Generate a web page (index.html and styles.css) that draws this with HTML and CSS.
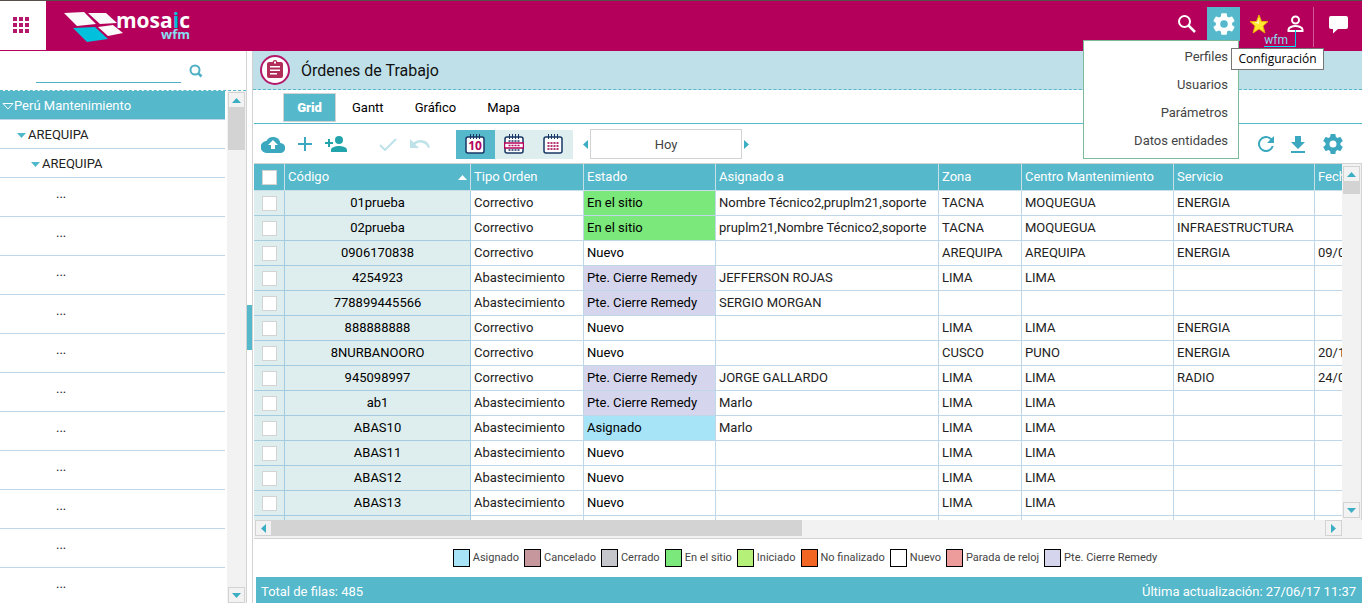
FILE: index.html
```html
<!DOCTYPE html>
<html lang="es">
<head>
<meta charset="utf-8">
<title>Mosaic WFM - Órdenes de Trabajo</title>
<link rel="stylesheet" href="styles.css">
</head>
<body>
<header class="topbar">
  <button class="apps" aria-label="Aplicaciones">
    <svg width="17" height="17" viewBox="0 0 17 17" fill="#b5176a"><path d="M0 0h4v4H0zM6 0h4v4H6zM12 0h4v4h-4zM0 6h4v4H0zM6 6h4v4H6zM12 6h4v4h-4zM0 12h4v4H0zM6 12h4v4H6zM12 12h4v4h-4z"/></svg>
  </button>
  <a class="logo" href="#" aria-label="mosaic wfm">
    <svg width="60" height="30" viewBox="0 0 60 30"><path fill="#fafafa" d="M0 1 20 0 32 12 13 14zM24 1 42 1 53 11 36 12zM34 15 49 13 59 21 44 24z"/><path fill="#00c0dc" d="M9 16 31 15 44 27 23 30z"/></svg>
    <span class="logo-text"><span class="logo-name">mosa<span class="logo-i">i</span>c</span><span class="logo-sub">wfm</span></span>
  </a>
  <div class="top-actions">
    <button class="top-btn" aria-label="Buscar"><svg width="20" height="20" viewBox="0 0 20 20" fill="none" stroke="#fff"><circle cx="7.500" cy="7.500" r="5.500" stroke-width="2"/><path d="m11.500 11.500 6.500 6.500" stroke-width="2.500"/></svg></button>
    <div class="config">
      <button class="top-btn config-btn" aria-label="Configuración"><svg width="26" height="26" viewBox="0 0 24 24" fill="#fff"><path d="M19.430 12.980c.040-.320.070-.640.070-.980s-.030-.660-.070-.980l2.110-1.650c.190-.150.240-.420.120-.640l-2-3.460c-.120-.220-.390-.300-.610-.220l-2.490 1c-.520-.400-1.080-.730-1.690-.980l-.380-2.650A.49.490 0 0 0 14 2h-4c-.250 0-.460.180-.490.420l-.380 2.650c-.610.250-1.170.590-1.690.980l-2.490-1c-.230-.090-.490 0-.610.220l-2 3.460c-.130.220-.070.490.120.640l2.110 1.650c-.040.320-.070.650-.070.980s.030.660.070.980l-2.110 1.650c-.190.150-.240.420-.120.640l2 3.460c.120.220.390.300.610.220l2.490-1c.520.400 1.080.730 1.690.980l.380 2.650c.030.240.240.420.490.420h4c.250 0 .460-.180.490-.420l.380-2.650c.610-.250 1.170-.590 1.690-.980l2.490 1c.230.090.490 0 .610-.220l2-3.460c.120-.220.070-.490-.120-.640zM12 15.500a3.500 3.500 0 1 1 0-7 3.500 3.500 0 0 1 0 7z"/></svg></button>
      <nav class="menu" aria-label="Configuración">
        <a href="#">Perfiles</a><a href="#">Usuarios</a><a href="#">Parámetros</a><a href="#">Datos entidades</a>
      </nav>
      <div class="tooltip" role="tooltip">Configuración</div>
    </div>
    <button class="top-btn star" aria-label="Favoritos"><svg width="20" height="20" viewBox="0 0 20 20"><path fill="#ffe92e" stroke="#e9a90c" d="m10 1 2.500 6.500h6.500l-5 4.500 2 7-6-4-6 4 2-7-5-4.500h6.500z"/><path fill="#fffbc0" d="m9.500 5 .5 5-5-1.500 3-.5z"/></svg></button>
    <div class="user">
      <button class="top-btn" aria-label="Usuario"><svg width="17" height="18" viewBox="0 0 17 18" fill="none" stroke="#fff" stroke-width="2"><circle cx="8.500" cy="5" r="3.500"/><path d="M1.500 16v-1.500c0-2 4-3.500 7-3.500s7 1.500 7 3.500V16z"/></svg></button>
      <a class="user-name" href="#">wfm</a>
    </div>
    <button class="top-btn chat" aria-label="Mensajes"><svg width="19" height="18" viewBox="0 0 19 18" fill="#fff"><path d="M2 0h15q2 0 2 2v9q0 2-2 2H9l-5 4.500V13H2q-2 0-2-2V2q0-2 2-2z"/></svg></button>
  </div>
</header>

<div class="workspace">
<aside class="sidebar">
  <form class="search">
    <input type="text" id="q" aria-label="Buscar entidad">
    <button type="button" aria-label="Buscar"><svg width="14" height="14" viewBox="0 0 14 14" fill="none" stroke="#4fb0c6"><circle cx="6" cy="6" r="4.500" stroke-width="2"/><path d="m9.500 9.500 3 3" stroke-width="2.500"/></svg></button>
  </form>
  <div class="tree-area">
    <ul class="tree">
      <li class="root"><svg width="12" height="7" viewBox="0 0 12 7"><path fill="none" stroke="#fff" d="M1 .5h10L6 6z"/></svg><span>Perú Mantenimiento</span></li>
      <li class="level-1"><svg width="9" height="5" viewBox="0 0 9 5"><path fill="#4fb8cb" d="M0 0h9L4.500 5z"/></svg><span>AREQUIPA</span></li>
      <li class="level-2"><svg width="9" height="5" viewBox="0 0 9 5"><path fill="#4fb8cb" d="M0 0h9L4.500 5z"/></svg><span>AREQUIPA</span></li>
      <li class="leaf">...</li><li class="leaf">...</li><li class="leaf">...</li><li class="leaf">...</li><li class="leaf">...</li><li class="leaf">...</li><li class="leaf">...</li><li class="leaf">...</li><li class="leaf">...</li><li class="leaf">...</li><li class="leaf">...</li>
    </ul>
    <div class="vscroll tree-scroll">
      <button class="arrow" aria-label="Subir"><svg width="9" height="5" viewBox="0 0 9 5"><path d="M0 5h9L4.500 0z"/></svg></button>
      <div class="thumb"></div>
      <button class="arrow end" aria-label="Bajar"><svg width="9" height="5" viewBox="0 0 9 5"><path d="M0 0h9L4.500 5z"/></svg></button>
    </div>
  </div>
</aside>
<div class="splitter"><div class="grip"></div></div>

<main class="main">
  <div class="title">
    <svg width="30" height="30" viewBox="0 0 30 30"><circle cx="15" cy="15" r="14" fill="#fff" stroke="#b5176a" stroke-width="2"/><path fill="#b32d5b" d="M9 7h3.500a2.600 2.600 0 0 1 5 0H21q2 0 2 2v12q0 2-2 2H9q-2 0-2-2V9q0-2 2-2z"/><path fill="#fff" d="M14 6.500h2v2h-2zM10 11h10v1.500H10zM10 14.500h10V16H10zM10 18h7v1.500h-7z"/></svg>
    <h1>Órdenes de Trabajo</h1>
  </div>
  <div class="tabs" role="tablist">
    <button class="tab active" role="tab">Grid</button><button class="tab" role="tab">Gantt</button><button class="tab" role="tab">Gráfico</button><button class="tab" role="tab">Mapa</button>
  </div>
  <div class="toolbar">
    <div class="tools">
      <button aria-label="Subir archivo"><svg width="24" height="17" viewBox="0 0 24 17"><path fill="#3ca8bf" d="M19.400 7A7.500 7.500 0 0 0 5.400 5 6 6 0 0 0 6 17h13a5 5 0 0 0 .4-10z"/><path fill="#fff" d="M10 13V9H7l5-5 5 5h-3v4z"/></svg></button>
      <button aria-label="Añadir"><svg width="14" height="14" viewBox="0 0 14 14"><path fill="#3ca8bf" d="M6 0h2v6h6v2H8v6H6V8H0V6h6z"/></svg></button>
      <button aria-label="Añadir usuario"><svg width="22" height="16" viewBox="0 0 22 16" fill="#23a3ac"><circle cx="14" cy="4" r="4"/><path d="M6 16v-2c0-3 5-4 8-4s8 1 8 4v2zM3 3h2v3h3v2H5v3H3V8H0V6h3z"/></svg></button>
      <button class="gap-before" aria-label="Aceptar" disabled><svg width="18" height="13" viewBox="0 0 18 13"><path fill="none" stroke="#bfe2ea" stroke-width="2" d="m1 7 5 5L17 1"/></svg></button>
      <button aria-label="Deshacer" disabled><svg width="20" height="10" viewBox="0 0 20 10"><path fill="#bfe2ea" d="M10.500 1c-2.600 0-5 1-6.900 2.600L0 0v9h9L5.400 5.400A8 8 0 0 1 18 9l2-.8A10 10 0 0 0 10.500 1z"/></svg></button>
    </div>
    <div class="periods">
      <button class="on" aria-label="Día"><svg width="20" height="20" viewBox="0 0 20 20"><rect x="1" y="3" width="18" height="16" rx="2" fill="#fff" stroke="#183766" stroke-width="1.500"/><path stroke="#183766" d="M5.500 0v5M8.500 0v5M11.500 0v5M14.500 0v5"/><text class="cal-day" x="10" y="16" text-anchor="middle">10</text></svg></button>
      <button aria-label="Semana"><svg width="20" height="20" viewBox="0 0 20 20"><rect x="1" y="3" width="18" height="16" rx="2" fill="#fff" stroke="#183766" stroke-width="1.500"/><path stroke="#183766" d="M5.500 0v5M8.500 0v5M11.500 0v5M14.500 0v5"/><path stroke="#183766" stroke-width="1.500" stroke-dasharray="2 1" d="M4.500 7h11M4.500 16h11"/><path fill="#fff" stroke="#b4005a" stroke-width="1.500" d="M.5 9h19v5H.5z"/><path stroke="#b4005a" stroke-width="1.500" stroke-dasharray="2 1" d="M4.500 11.500h11"/></svg></button>
      <button aria-label="Mes"><svg width="20" height="20" viewBox="0 0 20 20"><rect x="1" y="3" width="18" height="16" rx="2" fill="#fff" stroke="#183766" stroke-width="1.500"/><path stroke="#183766" d="M5.500 0v5M8.500 0v5M11.500 0v5M14.500 0v5"/><path stroke="#b5336f" stroke-width="2" stroke-dasharray="2 1" d="M4.500 9h11M4.500 12h11M4.500 15h11"/></svg></button>
    </div>
    <div class="date-nav">
      <button aria-label="Anterior"><svg width="5" height="9" viewBox="0 0 5 9"><path d="M5 0v9L0 4.500z"/></svg></button>
      <button class="today">Hoy</button>
      <button aria-label="Siguiente"><svg width="5" height="9" viewBox="0 0 5 9"><path d="M0 0v9l5-4.500z"/></svg></button>
    </div>
    <div class="right-tools">
      <button aria-label="Refrescar"><svg width="16" height="16" viewBox="0 0 16 16"><path fill="#3ca8bf" d="M13.650 2.350A8 8 0 1 0 15.730 10h-2.080A6 6 0 1 1 8 2c1.660 0 3.140.690 4.220 1.780L9 7h7V0z"/></svg></button>
      <button aria-label="Descargar"><svg width="14" height="17" viewBox="0 0 14 17"><path fill="#3ca8bf" d="M14 6h-4V0H4v6H0l7 7zM0 15v2h14v-2z"/></svg></button>
      <button aria-label="Ajustes"><svg width="24" height="24" viewBox="0 0 24 24" fill="#3ca8bf"><path d="M19.430 12.980c.040-.320.070-.640.070-.980s-.030-.660-.070-.980l2.110-1.650c.190-.150.240-.420.120-.640l-2-3.460c-.120-.220-.390-.300-.610-.220l-2.490 1c-.520-.400-1.080-.730-1.690-.980l-.380-2.650A.49.490 0 0 0 14 2h-4c-.250 0-.460.180-.490.420l-.380 2.650c-.610.250-1.170.590-1.690.980l-2.490-1c-.230-.090-.490 0-.610.220l-2 3.460c-.130.220-.070.490.120.640l2.110 1.650c-.040.320-.070.650-.070.980s.030.660.070.980l-2.110 1.650c-.190.150-.240.420-.120.640l2 3.460c.120.220.390.300.610.220l2.490-1c.520.400 1.080.730 1.690.980l.380 2.650c.030.240.240.420.490.420h4c.250 0 .460-.180.490-.420l.380-2.650c.610-.250 1.170-.590 1.690-.980l2.490 1c.230.090.490 0 .610-.220l2-3.460c.120-.220.070-.490-.120-.640zM12 15.500a3.500 3.500 0 1 1 0-7 3.500 3.500 0 0 1 0 7z"/></svg></button>
    </div>
  </div>
  <div class="grid">
    <div class="grid-view">
      <table>
        <colgroup><col class="c-check"><col class="c-code"><col class="c-type"><col class="c-state"><col class="c-assigned"><col class="c-zone"><col class="c-center"><col class="c-service"><col class="c-date"></colgroup>
        <thead><tr><th><input type="checkbox" aria-label="Seleccionar todo"></th><th><span class="sorted">Código <svg width="9" height="5" viewBox="0 0 9 5"><path fill="#fff" d="M0 5h9L4.500 0z"/></svg></span></th><th>Tipo Orden</th><th>Estado</th><th>Asignado a</th><th>Zona</th><th>Centro Mantenimiento</th><th>Servicio</th><th>Fecha</th></tr></thead>
        <tbody>
          <tr><td><input type="checkbox" aria-label="01prueba"></td><td>01prueba</td><td>Correctivo</td><td class="onsite">En el sitio</td><td>Nombre Técnico2,pruplm21,soporte</td><td>TACNA</td><td>MOQUEGUA</td><td>ENERGIA</td><td></td></tr>
          <tr><td><input type="checkbox" aria-label="02prueba"></td><td>02prueba</td><td>Correctivo</td><td class="onsite">En el sitio</td><td>pruplm21,Nombre Técnico2,soporte</td><td>TACNA</td><td>MOQUEGUA</td><td>INFRAESTRUCTURA</td><td></td></tr>
          <tr><td><input type="checkbox" aria-label="0906170838"></td><td>0906170838</td><td>Correctivo</td><td>Nuevo</td><td></td><td>AREQUIPA</td><td>AREQUIPA</td><td>ENERGIA</td><td>09/06/17</td></tr>
          <tr><td><input type="checkbox" aria-label="4254923"></td><td>4254923</td><td>Abastecimiento</td><td class="pending">Pte. Cierre Remedy</td><td>JEFFERSON ROJAS</td><td>LIMA</td><td>LIMA</td><td></td><td></td></tr>
          <tr><td><input type="checkbox" aria-label="778899445566"></td><td>778899445566</td><td>Abastecimiento</td><td class="pending">Pte. Cierre Remedy</td><td>SERGIO MORGAN</td><td></td><td></td><td></td><td></td></tr>
          <tr><td><input type="checkbox" aria-label="888888888"></td><td>888888888</td><td>Correctivo</td><td>Nuevo</td><td></td><td>LIMA</td><td>LIMA</td><td>ENERGIA</td><td></td></tr>
          <tr><td><input type="checkbox" aria-label="8NURBANOORO"></td><td>8NURBANOORO</td><td>Correctivo</td><td>Nuevo</td><td></td><td>CUSCO</td><td>PUNO</td><td>ENERGIA</td><td>20/12/16</td></tr>
          <tr><td><input type="checkbox" aria-label="945098997"></td><td>945098997</td><td>Correctivo</td><td class="pending">Pte. Cierre Remedy</td><td>JORGE GALLARDO</td><td>LIMA</td><td>LIMA</td><td>RADIO</td><td>24/05/17</td></tr>
          <tr><td><input type="checkbox" aria-label="ab1"></td><td>ab1</td><td>Abastecimiento</td><td class="pending">Pte. Cierre Remedy</td><td>Marlo</td><td>LIMA</td><td>LIMA</td><td></td><td></td></tr>
          <tr><td><input type="checkbox" aria-label="ABAS10"></td><td>ABAS10</td><td>Abastecimiento</td><td class="assigned">Asignado</td><td>Marlo</td><td>LIMA</td><td>LIMA</td><td></td><td></td></tr>
          <tr><td><input type="checkbox" aria-label="ABAS11"></td><td>ABAS11</td><td>Abastecimiento</td><td>Nuevo</td><td></td><td>LIMA</td><td>LIMA</td><td></td><td></td></tr>
          <tr><td><input type="checkbox" aria-label="ABAS12"></td><td>ABAS12</td><td>Abastecimiento</td><td>Nuevo</td><td></td><td>LIMA</td><td>LIMA</td><td></td><td></td></tr>
          <tr><td><input type="checkbox" aria-label="ABAS13"></td><td>ABAS13</td><td>Abastecimiento</td><td>Nuevo</td><td></td><td>LIMA</td><td>LIMA</td><td></td><td></td></tr>
          <tr><td></td><td></td><td></td><td></td><td></td><td></td><td></td><td></td><td></td></tr>
        </tbody>
      </table>
    </div>
    <div class="vscroll grid-scroll">
      <button class="arrow" aria-label="Subir"><svg width="9" height="5" viewBox="0 0 9 5"><path d="M0 5h9L4.500 0z"/></svg></button>
      <div class="thumb"></div>
      <button class="arrow end" aria-label="Bajar"><svg width="9" height="5" viewBox="0 0 9 5"><path d="M0 0h9L4.500 5z"/></svg></button>
    </div>
  </div>
  <div class="hscroll">
    <button class="arrow" aria-label="Izquierda"><svg width="5" height="9" viewBox="0 0 5 9"><path d="M5 0v9L0 4.500z"/></svg></button>
    <div class="track"><div class="thumb"></div></div>
    <button class="arrow" aria-label="Derecha"><svg width="5" height="9" viewBox="0 0 5 9"><path d="M0 0v9l5-4.500z"/></svg></button>
  </div>
  <ul class="legend">
    <li><i class="swatch assigned"></i>Asignado</li><li><i class="swatch cancelled"></i>Cancelado</li><li><i class="swatch closed"></i>Cerrado</li><li><i class="swatch onsite"></i>En el sitio</li><li><i class="swatch started"></i>Iniciado</li><li><i class="swatch unfinished"></i>No finalizado</li><li><i class="swatch"></i>Nuevo</li><li><i class="swatch stopped"></i>Parada de reloj</li><li><i class="swatch pending"></i>Pte. Cierre Remedy</li>
  </ul>
  <footer class="status"><span>Total de filas: 485</span><span>Última actualización: 27/06/17 11:37</span></footer>
</main>
</div>
</body>
</html>
```

FILE: styles.css
```css
* { box-sizing: border-box; }
body {
  margin: 0;
  height: 100vh;
  display: flex;
  flex-direction: column;
  overflow: hidden;
  background: #fff;
  color: #222;
  font: 13px/16px Roboto, "Liberation Sans", sans-serif;
}
button, input { font: inherit; color: inherit; margin: 0; padding: 0; border: 0; background: none; }
button { display: flex; align-items: center; justify-content: center; }
ul { list-style: none; margin: 0; padding: 0; }
a { color: inherit; text-decoration: none; }
svg { display: block; flex: none; }

/* Top bar */
.topbar { display: flex; flex: none; height: 51px; background: #b4005a; border-top: 1px solid #55504a; }
.apps { width: 46px; background: #fff; border-bottom: 1px solid #b4005a; padding-right: 4px; }
.logo { display: flex; padding: 11px 0 0 18px; }
.logo-text { display: flex; flex-direction: column; align-items: flex-end; margin-left: -8px; color: #fff; font-family: "Open Sans", sans-serif; font-weight: 700; }
.logo-name { font-size: 21px; line-height: 16px; }
.logo-i { color: #00c0dc; }
.logo-sub { font-size: 13px; line-height: 12px; color: #8adcf0; }
.top-actions { display: flex; margin-left: auto; padding-top: 6px; }
.top-btn { width: 36px; height: 34px; }
.config { position: relative; margin-left: 2px; }
.config-btn { width: 33px; background: #55b8cb; }
.star { width: 37px; }
.menu {
  position: absolute;
  z-index: 2;
  top: 33px;
  right: 1px;
  width: 156px;
  padding: 2px 10px 3px;
  background: #fff;
  border: 1px solid #7dba9a;
  color: #444;
  text-align: right;
}
.menu a { display: block; line-height: 28px; }
.tooltip {
  position: absolute;
  z-index: 3;
  top: 41px;
  left: 24px;
  width: 93px;
  height: 22px;
  border: 1px solid #767676;
  background: #fff;
  color: #000;
  font: 12px/20px "Open Sans", sans-serif;
  text-align: center;
}
.user { position: relative; }
.user-name { position: absolute; right: 17px; top: 28px; padding-right: 8px; line-height: 11px; font-size: 12px; color: #8adcf0; border-bottom: 1px solid #00e5ff; }
.user::after { content: ""; position: absolute; right: 17px; top: 23px; height: 17px; border-right: 1px solid #00d0ee; }
.chat { width: 49px; height: 40px; border-left: 1px solid #cf5a96; padding-bottom: 4px; }

/* Sidebar */
.workspace { display: flex; flex: 1; min-height: 0; }
.sidebar { display: flex; flex-direction: column; width: 247px; flex: none; border-right: 1px solid #d3d3d3; }
.search { display: flex; flex: none; height: 40px; padding: 8px 0 7px 36px; border-bottom: 1px dashed #55b8cb; }
.search input { width: 145px; height: 24px; border-bottom: 1px solid #4fb0c6; outline: 0; }
.search button { margin-left: 8px; }
.tree-area { display: flex; flex: 1; min-height: 0; }
.tree { flex: 1; overflow: hidden; }
.tree li { display: flex; align-items: center; height: 29px; padding-top: 2px; border-bottom: 1px solid #c0d7ea; }
.tree .root { padding-left: 2px; background: #55b8cb; color: #fff; }
.tree .level-1 { padding-left: 17px; gap: 2px; }
.tree .level-2 { padding-left: 31px; gap: 2px; }
.tree .leaf { height: 39px; padding: 0 0 6px 56px; }

/* Scrollbars */
.vscroll { display: flex; flex-direction: column; flex: none; background: #f2f2f2; }
.arrow { flex: none; width: 17px; height: 16px; border: 1px solid #d3d3d3; background: #f2f2f2; }
.arrow path, .date-nav path { fill: #3caec4; }
.end { margin-top: auto; }
.thumb { background: #d3d3d3; }
.tree-scroll { margin-left: 2px; padding: 1px 1px 0; width: 19px; }
.tree-scroll .thumb { height: 42px; }
.splitter { display: flex; align-items: center; flex: none; width: 5px; }
.grip { width: 5px; height: 45px; background: #55b8cb; }

/* Main panel */
.main { display: flex; flex-direction: column; flex: 1; min-width: 0; border-left: 1px solid #d3d3d3; padding-left: 1px; }
.title { display: flex; align-items: center; gap: 11px; flex: none; height: 39px; margin-left: -1px; padding-left: 7px; background: #bfe0e8; border-bottom: 1px dashed #55b8cb; }
.title h1 { margin: 0; padding-top: 2px; font-size: 16px; font-weight: 400; color: #111; }
.tabs { display: flex; flex: none; height: 34px; padding: 3px 0 0 29px; border-bottom: 1px solid #55b8cb; color: #000; }
.tab { height: 29px; padding: 0 15px 0 16px; }
.tab.active { width: 53px; padding: 0; background: #55b8cb; border: 1px solid #d3d3d3; color: #fff; font-weight: 900; }
.toolbar { display: flex; align-items: center; flex: none; height: 39px; padding-top: 1px; }
.tools { display: flex; align-items: center; gap: 13px; padding-left: 7px; width: 202px; }
.gap-before { margin-left: 19px; }
.periods { display: flex; background: #deeeee; }
.periods button { width: 39px; height: 29px; padding-right: 1px; }
.periods .on { background: #55b8cb; }
.cal-day { font: 700 12px "Open Sans", sans-serif; fill: #b4005a; }
.date-nav { display: flex; align-items: center; gap: 2px; margin-left: 10px; }
.today { width: 152px; height: 30px; padding-top: 1px; border: 1px solid #d3d3d3; color: #444; }
.right-tools { display: flex; align-items: center; gap: 17px; margin-left: auto; padding-right: 17px; }
.right-tools button:last-child { margin-left: -1px; }

/* Orders grid */
.grid { display: flex; flex: 1; min-height: 0; border-top: 1px solid #d3d3d3; }
.grid-view { flex: 1; min-width: 0; overflow: hidden; }
table { table-layout: fixed; width: 1180px; border-collapse: separate; border-spacing: 0; }
.c-check { width: 31px; }
.c-code { width: 186px; }
.c-type { width: 113px; }
.c-state { width: 132px; }
.c-assigned { width: 223px; }
.c-zone { width: 83px; }
.c-center { width: 152px; }
.c-service { width: 141px; }
th, td { height: 25px; padding: 0 3px; border: 0 solid #c0d7ea; border-width: 0 1px 1px 0; text-align: left; white-space: nowrap; font-weight: 400; }
th { height: 27px; background: #55b8cb; color: #fff; border-color: #c9dfe8; }
.sorted { display: flex; align-items: center; justify-content: space-between; }
td:nth-child(-n+2) { background: #deeeee; border-color: #a4cbe0; text-align: center; color: #000; }
td:nth-child(4) { color: #000; }
th:first-child, td:first-child { padding: 0; }
td input, th input { appearance: none; display: block; width: 15px; height: 15px; margin: 0 auto; background: #fff; border: 1px solid #d3d3d3; }
.grid-scroll { width: 20px; padding: 2px 1px; border-right: 1px solid #d3d3d3; }
.grid-scroll .thumb { height: 12px; }
.hscroll { display: flex; flex: none; height: 19px; padding: 0 20px 2px 1px; background: #f2f2f2; border-bottom: 1px solid #d3d3d3; }
.track { display: flex; flex: 1; }
.track .thumb { width: 50.3%; }

/* Status colours */
.assigned { background: #a8e4f7; }
.cancelled { background: #c6979d; }
.closed { background: #c5c6cb; }
.onsite { background: #7ae87a; }
.started { background: #b5f078; }
.unfinished { background: #f26522; }
.stopped { background: #ee9b9b; }
.pending { background: #d5d6ee; }

.legend { display: flex; flex: none; align-items: center; justify-content: center; gap: 5px; height: 38px; padding: 0 6px 0 0; font-size: 11px; color: #444; }
.legend li { display: flex; align-items: center; gap: 3px; }
.swatch { width: 17px; height: 18px; border: 1px solid #000; }
.status { display: flex; flex: none; align-items: center; justify-content: space-between; height: 26px; margin-left: 2px; padding: 3px 6px 0 5px; background: #55b8cb; color: #fff; }
```
